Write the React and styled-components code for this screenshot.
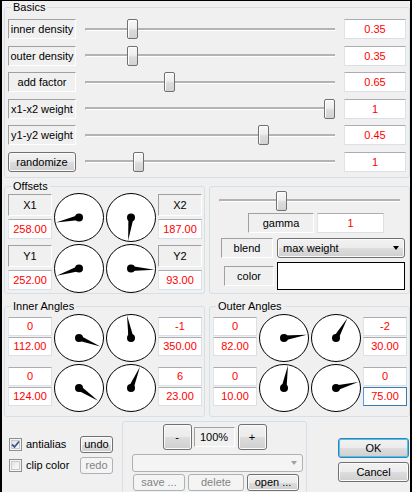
import React from 'react';
import styled, { createGlobalStyle, css } from 'styled-components';

const GlobalStyle = createGlobalStyle`
  html, body { margin: 0; padding: 0; background: #f0f0f0; }
  body {
    font-family: "Liberation Sans", Arial, sans-serif;
    font-size: 11px;
    color: #000;
  }
  * { box-sizing: border-box; }
`;

const Window = styled.div`
  width: 412px;
  height: 492px;
  overflow: hidden;
  background: #f0f0f0;
  border-top: 1px solid #000;
  border-left: 2px solid #000;
  border-right: 2px solid #000;
  padding-left: 2px;
  display: flex;
  flex-direction: column;
`;

const Group = styled.fieldset`
  margin: ${p => p.$mt || 0}px 0 0;
  padding: ${p => p.$pad || '0'};
  border: 1px solid #d5dfe5;
  border-radius: 3px;
  min-width: 0;
`;

const Legend = styled.legend`
  padding: 0 2px;
  margin-left: 3px;
  line-height: 13px;
  font-size: 11px;
`;

const Rows = styled.div`
  display: flex;
  flex-direction: column;
  gap: 6.5px;
`;

const SliderRow = styled.div`
  display: grid;
  grid-template-columns: 68px 1fr 62px;
  align-items: center;
  height: 20px;
`;

const StaticLabel = styled.div`
  height: ${p => p.$h || 20}px;
  width: ${p => (p.$w ? `${p.$w}px` : 'auto')};
  line-height: ${p => (p.$h || 20) - 2}px;
  border: 1px solid;
  border-color: #a0a0a0 #fff #fff #a0a0a0;
  background: #f0f0f0;
  text-align: center;
  white-space: nowrap;
`;

const Value = styled.div`
  height: ${p => p.$h || 20}px;
  width: ${p => (p.$w ? `${p.$w}px` : 'auto')};
  line-height: ${p => (p.$h || 20) - 2}px;
  background: #fff;
  border: 1px solid #dbdfe6;
  border-top-color: #abadb3;
  border-left-color: #e2e3ea;
  color: #f00;
  text-align: center;
  ${p => p.$focus && css`
    border-color: #3d7bad;
    border-top-color: #3d7bad;
    border-left-color: #569de5;
  `}
`;

const Button = styled.button`
  font: inherit;
  font-size: 11px;
  color: #000;
  padding: 0;
  height: ${p => p.$h || 20}px;
  width: ${p => (p.$w ? `${p.$w}px` : '100%')};
  border: 1px solid #707070;
  border-radius: 3px;
  background: linear-gradient(#f2f2f2 0%, #ebebeb 50%, #dddddd 51%, #cfcfcf 100%);
  box-shadow: inset 0 0 0 1px #fbfbfb;
  ${p => p.$default && css`
    border-color: #3c7fb1;
    box-shadow: inset 0 0 0 1px #48c4f0;
  `}
  &:disabled {
    color: #838383;
    border-color: #adb2b5;
    background: #f4f4f4;
    box-shadow: none;
  }
`;

const SliderBox = styled.div`
  position: relative;
  height: 20px;
  padding: 0 9px;
  display: flex;
  align-items: center;
`;

const Track = styled.div`
  flex: 1;
  height: 3px;
  border-top: 2px solid #b3b3b3;
  border-left: 1px solid #b3b3b3;
  border-bottom: 1px solid #fff;
  background: #e7eaea;
`;

const Thumb = styled.div`
  position: absolute;
  top: 0;
  width: 11px;
  height: 20px;
  border: 1px solid #707070;
  border-radius: 2px;
  background: linear-gradient(#f7f7f7 0%, #eeeeee 45%, #dcdcdc 55%, #d2d2d2 100%);
  box-shadow: inset 1px 1px 0 #fff;
`;

const Slider = ({ pos }) => (
  <SliderBox>
    <Track />
    <Thumb style={{ left: `calc(9px + ${pos} * (100% - 18px) - 5.5px)` }} />
  </SliderBox>
);

const Split = styled.div`
  display: grid;
  grid-template-columns: 201px 1fr;
  column-gap: 4px;
  margin-top: ${p => p.$mt}px;
`;

const DialGrid = styled.div`
  display: grid;
  grid-template-columns: 44px 50px 50px 44px;
  grid-auto-rows: ${p => p.$row}px;
  column-gap: 2px;
  row-gap: 2px;
`;

const Side = styled.div`
  display: flex;
  flex-direction: column;
  gap: ${p => p.$gap}px;
  padding-top: ${p => p.$pt}px;
`;

const DialSvg = styled.svg`
  display: block;
`;

const Dial = ({ angle, h }) => {
  const cx = 25;
  const cy = h / 2;
  const r = Math.min(24, h / 2 - 0.5);
  const a = (angle * Math.PI) / 180;
  const dx = Math.sin(a);
  const dy = -Math.cos(a);
  const w = 2.6;
  const pts = [
    [cx + dx * (r - 0.5), cy + dy * (r - 0.5)],
    [cx - dy * w, cy + dx * w],
    [cx + dy * w, cy - dx * w],
  ]
    .map(p => p.map(v => v.toFixed(2)).join(','))
    .join(' ');
  return (
    <DialSvg width="50" height={h} viewBox={`0 0 50 ${h}`}>
      <ellipse cx={cx} cy={cy} rx="24.5" ry={h / 2 - 0.5} fill="#fff" stroke="#000" />
      <polygon points={pts} fill="#000" />
      <circle cx={cx} cy={cy} r="4" fill="#000" />
    </DialSvg>
  );
};

const Panel = styled.div`
  display: flex;
  flex-direction: column;
  padding-top: 4px;
`;

const GammaRow = styled.div`
  display: flex;
  gap: 3px;
  padding-left: 38px;
  margin-top: 2px;
`;

const FormRow = styled.div`
  display: grid;
  grid-template-columns: 64px 128px;
  column-gap: 3px;
  align-items: center;
  margin-top: ${p => p.$mt}px;
  & > :first-child { justify-self: end; margin-right: ${p => p.$lm || 0}px; }
`;

const Select = styled.div`
  position: relative;
  height: 20px;
  line-height: 18px;
  padding-left: 5px;
  border: 1px solid #707070;
  border-radius: 3px;
  background: linear-gradient(#f2f2f2 0%, #ebebeb 50%, #dddddd 51%, #cfcfcf 100%);
  box-shadow: inset 0 0 0 1px #fbfbfb;
  color: ${p => (p.$disabled ? '#838383' : '#000')};
  ${p => p.$disabled && css`
    height: 18px;
    border-color: #adb2b5;
    background: #f4f4f4;
    box-shadow: none;
  `}
`;

const Caret = styled.span`
  position: absolute;
  right: 5px;
  top: 50%;
  margin-top: -2px;
  border-left: 3.5px solid transparent;
  border-right: 3.5px solid transparent;
  border-top: 4px solid ${p => p.$color};
`;

const ColorSwatch = styled.div`
  height: 28px;
  background: #fff;
  border: 1px solid #000;
`;

const Bottom = styled.div`
  display: flex;
  align-items: flex-start;
  padding-left: 5px;
`;

const Opts = styled.div`
  width: 104px;
  margin-top: 19px;
  display: grid;
  grid-template-columns: 1fr 33px;
  row-gap: 4px;
  align-items: center;
`;

const CheckLabel = styled.label`
  display: flex;
  align-items: center;
  gap: 4px;
  white-space: nowrap;
`;

const CheckBox = styled.span`
  width: 13px;
  height: 13px;
  border: 1px solid #8e8f8f;
  background: linear-gradient(135deg, #dcdcdc 0%, #f4f4f4 60%, #fcfcfc 100%);
  box-shadow: inset 0 0 0 1px #f4f4f4, inset 0 0 0 2px #c9cbd0;
  display: flex;
  align-items: center;
  justify-content: center;
`;

const Check = ({ checked }) => (
  <CheckBox>
    {checked && (
      <svg width="9" height="9" viewBox="0 0 9 9">
        <path d="M1 4.5 L3.5 7 L8 1.5" fill="none" stroke="#3d5690" strokeWidth="1.8" />
      </svg>
    )}
  </CheckBox>
);

const FileGroup = styled(Group)`
  width: 185px;
  height: 80px;
  margin-left: 9px;
`;

const ZoomRow = styled.div`
  display: flex;
  justify-content: center;
  align-items: center;
  gap: 2px;
  & > :last-child { margin-left: 1px; }
`;

const ComboWrap = styled.div`
  width: 171px;
  margin: 4px 0 0 9px;
`;

const FileButtons = styled.div`
  display: flex;
  gap: 3px;
  margin: 2px 0 0 10px;
`;

const Actions = styled.div`
  width: 71px;
  margin: 21px 0 0 31px;
  display: flex;
  flex-direction: column;
  gap: 4px;
`;

const basics = [
  { label: 'inner density', value: '0.35', pos: 0.188 },
  { label: 'outer density', value: '0.35', pos: 0.188 },
  { label: 'add factor', value: '0.65', pos: 0.336 },
  { label: 'x1-x2 weight', value: '1', pos: 0.976 },
  { label: 'y1-y2 weight', value: '0.45', pos: 0.712 },
  { label: 'randomize', value: '1', pos: 0.212, button: true },
];

const AngleGroup = ({ title, rows, focusLast }) => (
  <Group $mt={0} $pad="1px 2px 4px 3px">
    <Legend>{title}</Legend>
    <DialGrid $row={48}>
      {rows.map((r, i) => (
        <React.Fragment key={i}>
          <Side $gap={1} $pt={3}>
            <Value $h={19}>{r.l[0]}</Value>
            <Value $h={19}>{r.l[1]}</Value>
          </Side>
          <Dial angle={r.a[0]} h={48} />
          <Dial angle={r.a[1]} h={48} />
          <Side $gap={1} $pt={3}>
            <Value $h={19}>{r.r[0]}</Value>
            <Value $h={19} $focus={focusLast && i === rows.length - 1}>{r.r[1]}</Value>
          </Side>
        </React.Fragment>
      ))}
    </DialGrid>
  </Group>
);

export default function App() {
  return (
    <>
      <GlobalStyle />
      <Window>
        <Group $pad="5px 3px 5px 3px">
          <Legend>Basics</Legend>
          <Rows>
            {basics.map(b => (
              <SliderRow key={b.label}>
                {b.button ? <Button $h={20}>{b.label}</Button> : <StaticLabel>{b.label}</StaticLabel>}
                <Slider pos={b.pos} />
                <Value>{b.value}</Value>
              </SliderRow>
            ))}
          </Rows>
        </Group>

        <Split $mt={2}>
          <Group $pad="0 2px 0 3px">
            <Legend>Offsets</Legend>
            <DialGrid $row={49}>
              <Side $gap={3} $pt={1}>
                <StaticLabel $h={22}>X1</StaticLabel>
                <Value>258.00</Value>
              </Side>
              <Dial angle={258} h={49} />
              <Dial angle={187} h={49} />
              <Side $gap={3} $pt={1}>
                <StaticLabel $h={22}>X2</StaticLabel>
                <Value>187.00</Value>
              </Side>
              <Side $gap={3} $pt={1}>
                <StaticLabel $h={22}>Y1</StaticLabel>
                <Value>252.00</Value>
              </Side>
              <Dial angle={252} h={49} />
              <Dial angle={93} h={49} />
              <Side $gap={3} $pt={1}>
                <StaticLabel $h={22}>Y2</StaticLabel>
                <Value>93.00</Value>
              </Side>
            </DialGrid>
          </Group>
          <Group $mt={6}>
            <Panel>
              <Slider pos={0.347} />
              <GammaRow>
                <StaticLabel $w={66}>gamma</StaticLabel>
                <Value $w={67}>1</Value>
              </GammaRow>
              <FormRow $mt={5} $lm={1}>
                <StaticLabel $w={52}>blend</StaticLabel>
                <Select>
                  max weight
                  <Caret $color="#000" />
                </Select>
              </FormRow>
              <FormRow $mt={4}>
                <StaticLabel $w={50}>color</StaticLabel>
                <ColorSwatch />
              </FormRow>
            </Panel>
          </Group>
        </Split>

        <Split $mt={6}>
          <AngleGroup
            title="Inner Angles"
            rows={[
              { l: ['0', '112.00'], a: [112, 350], r: ['-1', '350.00'] },
              { l: ['0', '124.00'], a: [124, 23], r: ['6', '23.00'] },
            ]}
          />
          <AngleGroup
            title="Outer Angles"
            focusLast
            rows={[
              { l: ['0', '82.00'], a: [82, 30], r: ['-2', '30.00'] },
              { l: ['0', '10.00'], a: [10, 75], r: ['0', '75.00'] },
            ]}
          />
        </Split>

        <Bottom>
          <Opts>
            <CheckLabel><Check checked />antialias</CheckLabel>
            <Button $h={17}>undo</Button>
            <CheckLabel><Check />clip color</CheckLabel>
            <Button $h={17} disabled>redo</Button>
          </Opts>
          <FileGroup $mt={4} $pad="2px 0 0 0">
            <ZoomRow>
              <Button $w={29} $h={26}>-</Button>
              <StaticLabel $w={41}>100%</StaticLabel>
              <Button $w={29} $h={26}>+</Button>
            </ZoomRow>
            <ComboWrap>
              <Select $disabled>
                <Caret $color="#a0a0a0" />
              </Select>
            </ComboWrap>
            <FileButtons>
              <Button $w={52} $h={17} disabled>save ...</Button>
              <Button $w={56} $h={17} disabled>delete</Button>
              <Button $w={52} $h={17}>open ...</Button>
            </FileButtons>
          </FileGroup>
          <Actions>
            <Button $default>OK</Button>
            <Button>Cancel</Button>
          </Actions>
        </Bottom>
      </Window>
    </>
  );
}
